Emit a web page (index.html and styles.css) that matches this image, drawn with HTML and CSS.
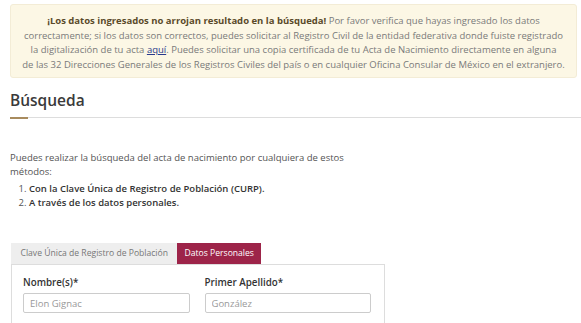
FILE: index.html
```html
<!DOCTYPE html>
<html lang="es">
<head>
    <meta charset="UTF-8">
    <meta name="viewport" content="width=device-width, initial-scale=1.0">
    <title>Búsqueda</title>
    <link rel="stylesheet" href="styles.css">
</head>
<body>

    <div class="alert">
        <strong>¡Los datos ingresados no arrojan resultado en la búsqueda!</strong> Por favor verifica que hayas ingresado los datos<br>
        correctamente; si los datos son correctos, puedes solicitar al Registro Civil de la entidad federativa donde fuiste registrado<br>
        la digitalización de tu acta <a href="#">aquí</a>. Puedes solicitar una copia certificada de tu Acta de Nacimiento directamente en alguna<br>
        de las 32 Direcciones Generales de los Registros Civiles del país o en cualquier Oficina Consular de México en el extranjero.
    </div>

    <h2 class="title">Búsqueda</h2>
    <div class="title-rule"><span></span></div>

    <p class="intro">Puedes realizar la búsqueda del acta de nacimiento por cualquiera de estos métodos:</p>
    <ol class="methods">
        <li>Con la Clave Única de Registro de Población (CURP).</li>
        <li>A través de los datos personales.</li>
    </ol>

    <div class="tabs">
        <div class="tab">Clave Única de Registro de Población</div>
        <div class="tab active">Datos Personales</div>
    </div>
    <div class="panel">
        <div class="field">
            <label for="nombre">Nombre(s)*</label>
            <input type="text" id="nombre" value="Elon Gignac">
        </div>
        <div class="field">
            <label for="apellido1">Primer Apellido*</label>
            <input type="text" id="apellido1" value="González">
        </div>
    </div>

</body>
</html>
```

FILE: styles.css
```css
body {
    font-family: "Open Sans", sans-serif;
    margin: 0;
    padding: 4px 0 0 10px;
    color: #545454;
    overflow: hidden;
}
.alert {
    margin-right: 4px;
    padding: 9px 8px 5px;
    background-color: #fcf7e5;
    border: 1px solid #f3ecd6;
    border-radius: 3px;
    color: #7a7a7a;
    font-size: 9.5px;
    line-height: 14.5px;
    text-align: center;
    white-space: nowrap;
}
.alert strong {
    color: #5a4a2a;
}
.alert a {
    color: #2a3a8c;
}
.title {
    margin: 11px 0 0;
    font-size: 15.5px;
    font-weight: 600;
    color: #3a3a3a;
    line-height: 22px;
}
.title-rule {
    margin-top: 6px;
    border-top: 1px solid #ddd;
}
.title-rule span {
    display: block;
    width: 18px;
    height: 2px;
    margin-top: -1px;
    background-color: #a88b5e;
}
.intro {
    margin: 32px 0 0;
    width: 350px;
    font-size: 9.5px;
    line-height: 14px;
}
.methods {
    margin: 3px 0 0;
    padding-left: 19px;
    font-size: 9.5px;
    line-height: 14px;
}
.methods li {
    font-weight: 600;
    color: #333;
}
.methods li::marker {
    font-weight: 400;
    color: #545454;
}
.tabs {
    display: flex;
    margin-top: 33px;
    margin-left: 1px;
    width: 374px;
    border-bottom: 1px solid #ddd;
}
.tab {
    padding: 0 9.5px;
    height: 21px;
    line-height: 21px;
    font-size: 8.6px;
    background-color: #eee;
    color: #777;
}
.tab.active {
    padding: 0 7px;
    background-color: #9d2449;
    color: #fff;
}
.panel {
    display: flex;
    gap: 15px;
    width: 348px;
    margin-left: 1px;
    padding: 11px 13px 12px 11px;
    border: 1px solid #ddd;
    border-top: none;
}
.field {
    flex: 1;
    display: flex;
    flex-direction: column;
}
.field label {
    font-size: 9.8px;
    line-height: 13px;
    font-weight: 600;
    color: #333;
    margin-bottom: 4px;
}
.field input {
    box-sizing: border-box;
    height: 20px;
    padding: 0 6px;
    border: 1px solid #ccc;
    border-radius: 2px;
    font-family: inherit;
    font-size: 9.5px;
    color: #999;
}
```
